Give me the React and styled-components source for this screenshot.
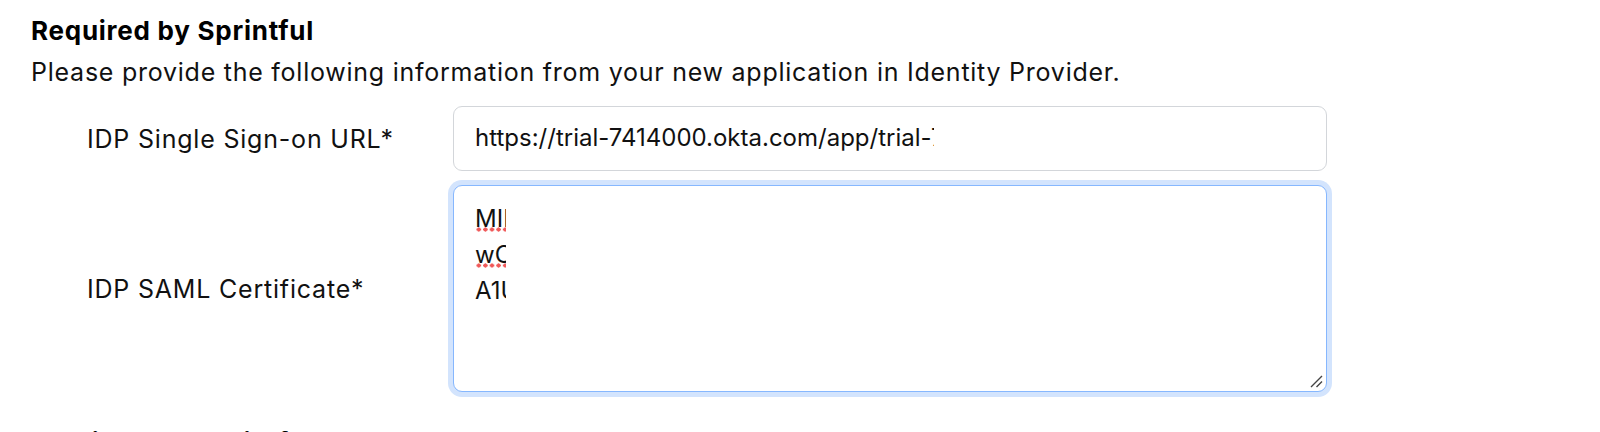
import React from "react";
import styled, { createGlobalStyle } from "styled-components";

const Global = createGlobalStyle`
  html, body { margin: 0; padding: 0; background: #fff; }
  body { font-family: Inter, "Noto Sans", "Liberation Sans", sans-serif; color: #212529; }
`;

const Page = styled.div`
  padding: 13px 0 0 31px;
  width: 1600px;
  height: 432px;
  box-sizing: border-box;
  overflow: hidden;
`;

const Heading = styled.h3`
  margin: 0 0 5px;
  font-size: 26px;
  letter-spacing: 0.75px;
  line-height: 36px;
  font-weight: 700;
  color: #000;
`;

const Lead = styled.p`
  margin: 0;
  font-size: 25px;
  letter-spacing: 0.75px;
  line-height: 36px;
  color: #111;
`;

const Fields = styled.div`
  display: grid;
  grid-template-columns: 366px 874px;
  row-gap: 14px;
  margin: 16px 0 33px 56px;
  align-items: center;
`;

const Label = styled.label`
  font-size: 25px;
  letter-spacing: 0.8px;
  line-height: 36px;
  color: #111;
`;

const Control = styled.div`
  position: relative;
  box-sizing: border-box;
  height: ${(p) => p.$h}px;
  border: 1.5px solid ${(p) => (p.$focus ? "#86b7fe" : "#d3d6da")};
  border-radius: 9px;
  box-shadow: ${(p) => (p.$focus ? "0 0 0 5px #d3e4fd" : "none")};
  padding: ${(p) => p.$pad};
  font-size: 24px;
  line-height: 36px;
  color: #111;
  background: #fff;
`;

const Clip = styled.span`
  display: block;
  width: ${(p) => p.$w}px;
  overflow: hidden;
  white-space: nowrap;
`;

const Misspelled = styled.span`
  background-image: radial-gradient(circle, #f05a5a 1.9px, transparent 2.3px);
  background-size: 6.6px 5px;
  background-repeat: repeat-x;
  background-position: 0.5px calc(100% - 1.5px);
`;

const Grip = styled.svg`
  position: absolute;
  right: 3px;
  bottom: 3px;
`;

const Next = styled.h3`
  margin: 0;
  font-size: 26px;
  letter-spacing: 0.75px;
  line-height: 36px;
  font-weight: 700;
  color: #000;
`;

export default function App() {
  return (
    <>
      <Global />
      <Page>
        <Heading>Required by Sprintful</Heading>
        <Lead>Please provide the following information from your new application in Identity Provider.</Lead>
        <Fields>
          <Label>IDP Single Sign-on URL*</Label>
          <Control $h={65} $pad="13px 21px">
            <Clip $w={459}>https://trial-7414000.okta.com/app/trial-7414000_sprintful_1/exkf8v2</Clip>
          </Control>
          <Label>IDP SAML Certificate*</Label>
          <Control $h={207} $pad="15px 21px" $focus>
            <Clip $w={31}><Misspelled>MIIDqDCCApCgAwIBAgIGAY</Misspelled></Clip>
            <Clip $w={31}><Misspelled>wC</Misspelled>QYDVQQGEwJVUzETMBEGA1</Clip>
            <Clip $w={31}>A1UECAwKQ2FsaWZvcm5pYTEW</Clip>
            <Grip width="14" height="14" viewBox="0 0 14 14">
              <path d="M2 13 L13 2 M7.5 13 L13 7.5" stroke="#444" strokeWidth="1.4" fill="none" />
            </Grip>
          </Control>
        </Fields>
        <Next>Provided by Sprintful</Next>
      </Page>
    </>
  );
}
